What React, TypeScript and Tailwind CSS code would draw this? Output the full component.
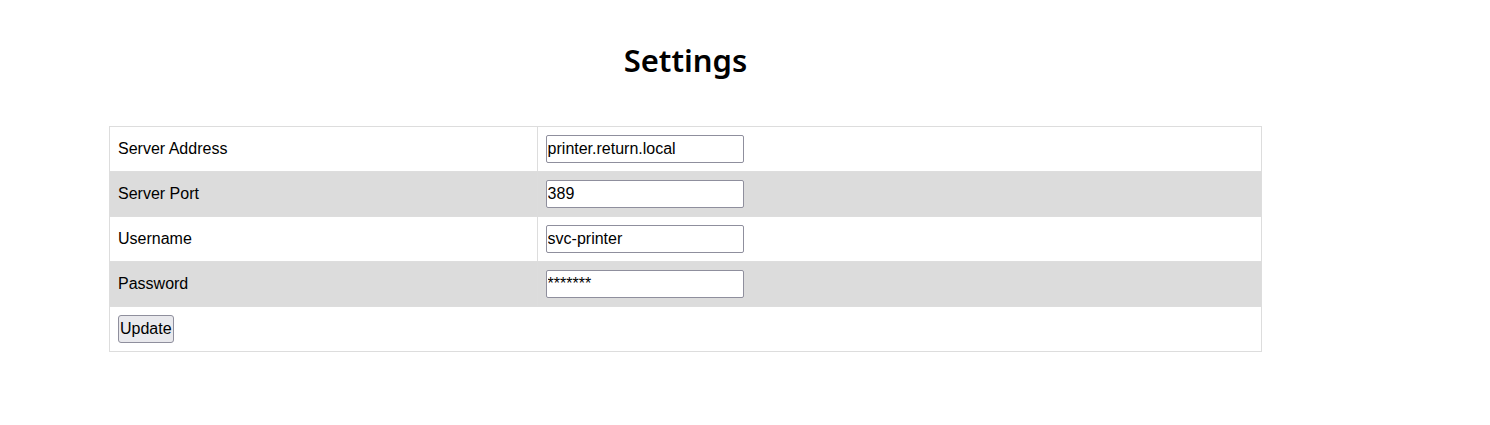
import React from "react";

const rows = [
  { label: "Server Address", value: "printer.return.local", type: "text" },
  { label: "Server Port", value: "389", type: "text" },
  { label: "Username", value: "svc-printer", type: "text" },
  { label: "Password", value: "*******", type: "text" },
];

export default function App() {
  return (
    <div className="min-h-[425px] bg-white" style={{ fontFamily: '"Liberation Sans", Arial, sans-serif' }}>
      <div className="ml-[109px] w-[1153px] pt-[37px]">
        <h1
          className="text-center text-[31px] font-semibold leading-[46px] text-black"
          style={{ fontFamily: '"Noto Sans", sans-serif' }}
        >
          Settings
        </h1>
        <table className="mt-[43px] w-[1153px] border-collapse border border-[#dddddd] text-[16px] text-black">
          <colgroup>
            <col className="w-[428px]" />
            <col className="w-[725px]" />
          </colgroup>
          <tbody>
            {rows.map((r, i) => (
              <tr key={r.label} className={i % 2 === 1 ? "bg-[#dcdcdc]" : "bg-white"}>
                <td className="h-[45px] border border-[#dddddd] px-[8px] py-0 align-middle leading-[18px]">
                  {r.label}
                </td>
                <td className="h-[45px] border border-[#dddddd] px-[8px] py-0 align-middle">
                  <input
                    type={r.type}
                    defaultValue={r.value}
                    className="block h-[28px] w-[198px] rounded-[2px] border border-[#8f8f9d] bg-white px-[1px] text-[16px] leading-[18px] text-black outline-none"
                    style={{ fontFamily: '"Liberation Sans", Arial, sans-serif' }}
                  />
                </td>
              </tr>
            ))}
            <tr className="bg-white">
              <td colSpan={2} className="h-[45px] border border-[#dddddd] px-[8px] py-0 align-middle">
                <button
                  className="block h-[28px] rounded-[3px] border border-[#8f8f9d] bg-[#e9e9ed] px-[1px] text-[16px] leading-[18px] text-black"
                  style={{ fontFamily: '"Liberation Sans", Arial, sans-serif' }}
                >
                  Update
                </button>
              </td>
            </tr>
          </tbody>
        </table>
      </div>
    </div>
  );
}
